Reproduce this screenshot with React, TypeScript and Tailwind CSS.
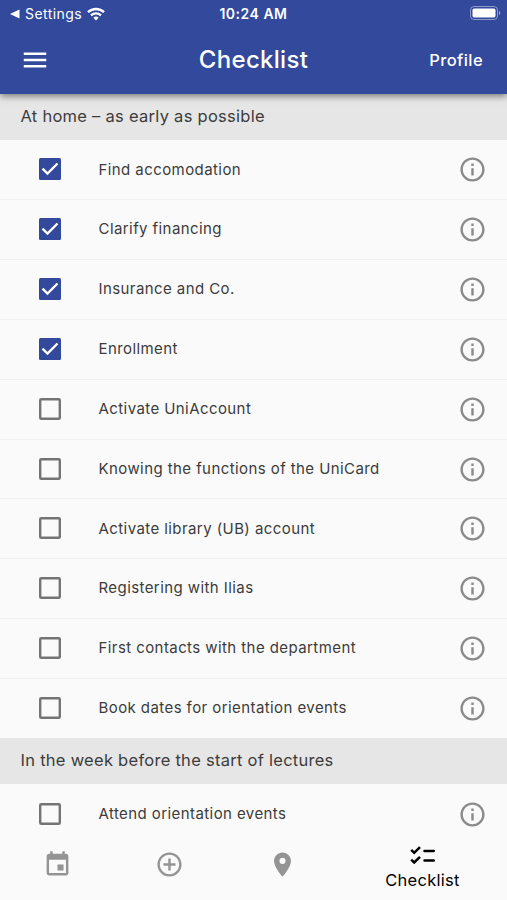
import { useState } from 'react'
import { MdAddCircleOutline, MdEvent, MdInfoOutline, MdMenu, MdPlace } from 'react-icons/md'

interface ChecklistEntry {
  id: string
  label: string
  done: boolean
}

interface ChecklistSection {
  title: string
  entries: ChecklistEntry[]
}

const initialSections: ChecklistSection[] = [
  {
    title: 'At home – as early as possible',
    entries: [
      { id: 'accomodation', label: 'Find accomodation', done: true },
      { id: 'financing', label: 'Clarify financing', done: true },
      { id: 'insurance', label: 'Insurance and Co.', done: true },
      { id: 'enrollment', label: 'Enrollment', done: true },
      { id: 'uniaccount', label: 'Activate UniAccount', done: false },
      { id: 'unicard', label: 'Knowing the functions of the UniCard', done: false },
      { id: 'library', label: 'Activate library (UB) account', done: false },
      { id: 'ilias', label: 'Registering with Ilias', done: false },
      { id: 'department', label: 'First contacts with the department', done: false },
      { id: 'dates', label: 'Book dates for orientation events', done: false },
    ],
  },
  {
    title: 'In the week before the start of lectures',
    entries: [{ id: 'attend', label: 'Attend orientation events', done: false }],
  },
]

function StatusBar() {
  return (
    <div className="grid h-7 grid-cols-3 items-center px-2 text-[14px] leading-none">
      <div className="flex items-center pl-0.5">
        <svg viewBox="0 0 10 10" className="size-[10px]" fill="currentColor">
          <path d="M0 5 9.5.6v8.8z" />
        </svg>
        <span className="ml-[5px] tracking-[0.45px]">Settings</span>
        <svg viewBox="0 0 18 14" className="ml-[5px] h-[14px] w-[18px]" fill="none" stroke="currentColor">
          <path d="M1 5.2a11.6 11.6 0 0 1 16 0" strokeWidth="2.5" />
          <path d="M4 8.4a7.3 7.3 0 0 1 10 0" strokeWidth="2.3" />
          <path d="M9 13.6 6.3 10.8a4 4 0 0 1 5.4 0z" fill="currentColor" stroke="none" />
        </svg>
      </div>
      <div className="text-center font-semibold tracking-[0.5px] whitespace-nowrap">10:24 AM</div>
      <div className="flex justify-end">
        <svg viewBox="0 0 31 14" className="-mt-0.5 -mr-0.5 h-[14px] w-[31px]">
          <rect x="0.5" y="0.5" width="27" height="13" rx="3.6" fill="none" stroke="#fff" strokeOpacity="0.45" />
          <rect x="2.5" y="2.5" width="23" height="9" rx="1.8" fill="#fff" />
          <path d="M29 5v4.2c1.8-.6 1.8-3.6 0-4.2z" fill="#fff" fillOpacity="0.5" />
        </svg>
      </div>
    </div>
  )
}

function Checkbox({ checked }: { checked: boolean }) {
  return (
    <svg viewBox="0 0 22 22" className="block size-[22px]" fill="none">
      {checked ? (
        <>
          <rect width="22" height="22" rx="1.5" fill="#32499c" />
          <path d="m3.5 10.7 5 4.8L18.5 5.5" stroke="#fff" strokeWidth="2.4" />
        </>
      ) : (
        <rect x="1.2" y="1.2" width="19.6" height="19.6" rx="1" stroke="#747474" strokeWidth="2.4" />
      )}
    </svg>
  )
}

function IconChecklist() {
  return (
    <svg viewBox="0 0 25 18" className="h-[18px] w-[25px]" fill="none" stroke="currentColor" strokeWidth="2.5">
      <path d="m1.2 3.9 3 2.9L10 1.2M1.2 13.6l3 2.9 5.8-5.6" />
      <path d="M14.5 4.9h9.3M14.5 14.6h9.3" strokeLinecap="round" />
    </svg>
  )
}

interface EntryRowProps {
  entry: ChecklistEntry
  onToggle: (id: string) => void
}

function EntryRow({ entry, onToggle }: EntryRowProps) {
  return (
    <li className="flex h-[59.83px] items-center border-t border-[#f0f0f0] pr-5 pl-[39px] first:border-transparent">
      <button
        type="button"
        role="checkbox"
        aria-checked={entry.done}
        aria-label={entry.label}
        className="pb-px"
        onClick={() => {
          onToggle(entry.id)
        }}
      >
        <Checkbox checked={entry.done} />
      </button>
      <span className="ml-[37.5px] flex-1 text-[15px] tracking-[0.42px] text-[#3c3c3c]">{entry.label}</span>
      <button type="button" aria-label={`About ${entry.label}`}>
        <MdInfoOutline className="size-[29px] text-[#8a8a8a]" />
      </button>
    </li>
  )
}

export default function App() {
  const [sections, setSections] = useState(initialSections)

  const toggle = (id: string) => {
    setSections((current) =>
      current.map((section) => ({
        ...section,
        entries: section.entries.map((entry) =>
          entry.id === id ? { ...entry, done: !entry.done } : entry,
        ),
      })),
    )
  }

  return (
    <div className="flex h-[900px] w-[507px] flex-col overflow-hidden bg-[#fafafa] font-['Inter',sans-serif]">
      <header className="relative z-10 h-[93.5px] shrink-0 bg-[#32499c] text-white shadow-[0_2px_7px_rgba(0,0,0,0.5)]">
        <StatusBar />
        <div className="grid h-[64px] grid-cols-3 items-center px-5">
          <button type="button" aria-label="Menu">
            <MdMenu className="size-[30px]" />
          </button>
          <h1 className="text-center text-[24px] font-medium tracking-[0.3px]">Checklist</h1>
          <span className="pr-1 text-right text-[16.5px] font-medium tracking-[0.4px]">Profile</span>
        </div>
      </header>

      <main className="min-h-0 flex-1 overflow-hidden">
        {sections.map((section) => (
          <section key={section.title}>
            <h2 className="flex h-[46px] items-center bg-[#e6e6e6] pb-[0.5px] pl-[20.5px] text-[16.5px] tracking-[0.27px] text-[#3c3c3c]">
              {section.title}
            </h2>
            <ul>
              {section.entries.map((entry) => (
                <EntryRow key={entry.id} entry={entry} onToggle={toggle} />
              ))}
            </ul>
          </section>
        ))}
      </main>

      {/* Bottom navigation */}
      <nav className="flex h-[71px] shrink-0 bg-[#fafafa] pl-px text-[#949494]">
        <button type="button" aria-label="Events" className="flex w-[112.5px] items-center justify-center">
          <MdEvent className="size-[29px]" />
        </button>
        <button type="button" aria-label="Add" className="flex w-[112.5px] items-center justify-center">
          <MdAddCircleOutline className="size-[29px]" />
        </button>
        <button type="button" aria-label="Places" className="flex w-[112px] items-center justify-center">
          <MdPlace className="size-[29px]" />
        </button>
        <button type="button" className="flex flex-1 flex-col items-center pt-[17px] text-black">
          <IconChecklist />
          <span className="mt-[5px] text-[16.5px] leading-[22px] tracking-[0.27px]">Checklist</span>
        </button>
      </nav>
    </div>
  )
}
